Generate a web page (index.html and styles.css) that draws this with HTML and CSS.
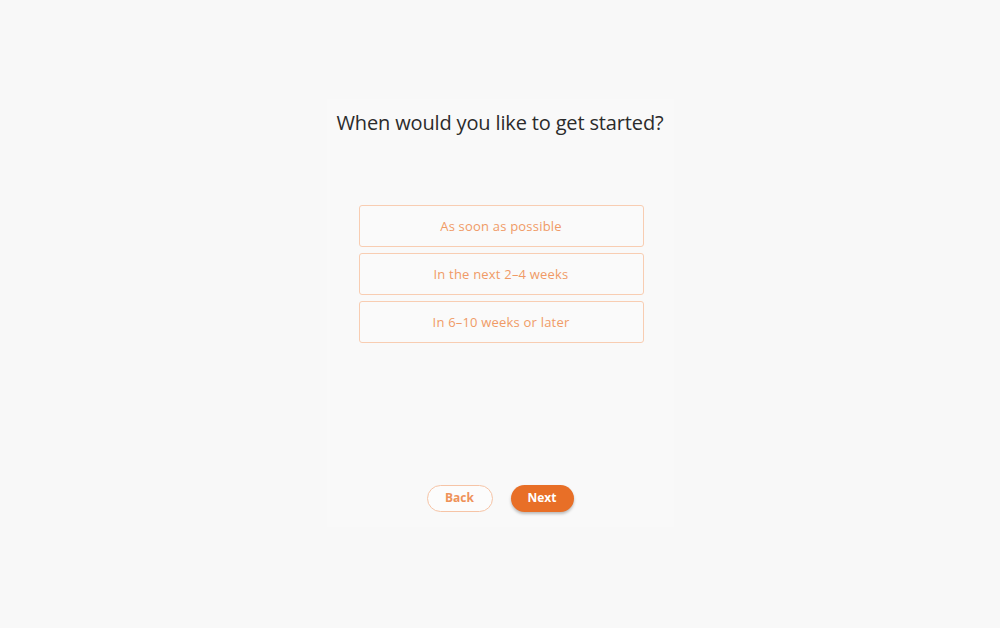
FILE: index.html
```html
<!DOCTYPE html>
<html lang="en">

<head>
  <meta charset="UTF-8">
  <meta name="viewport" content="width=device-width, initial-scale=1.0">
  <title>Get started</title>
  <link rel="stylesheet" href="styles.css">
</head>

<body>
  <div class="panel">
    <h1>When would you like to get started?</h1>

    <div class="options">
      <button class="option">As soon as possible</button>
      <button class="option">In the next 2–4 weeks</button>
      <button class="option">In 6–10 weeks or later</button>
    </div>

    <div class="nav">
      <button class="btn btn-back">Back</button>
      <button class="btn btn-next">Next</button>
    </div>
  </div>
</body>

</html>
```

FILE: styles.css
```css
body {
  margin: 0;
  background-color: #f8f8f8;
  font-family: "Open Sans", Arial, sans-serif;
  color: #2b2b2b;
}

.panel {
  width: 347px;
  height: 428px;
  margin: 99px auto 0;
  background-color: #f9f9f9;
  display: flex;
  flex-direction: column;
  align-items: center;
}

h1 {
  margin: 10px 0 0;
  font-size: 20px;
  font-weight: 400;
  line-height: 28px;
  letter-spacing: -0.15px;
  white-space: nowrap;
}

.options {
  display: flex;
  flex-direction: column;
  gap: 6px;
  margin: 68px 0 0 2px;
}

.option {
  width: 285px;
  height: 42px;
  background-color: #fafafa;
  border: 1px solid #f8cdb2;
  border-radius: 3px;
  color: #f09a66;
  font-family: inherit;
  font-size: 13px;
  letter-spacing: 0.2px;
  padding: 0 0 1px;
  cursor: pointer;
}

.nav {
  display: flex;
  gap: 18px;
  margin-top: 142px;
}

.btn {
  height: 27px;
  border-radius: 14px;
  font-family: inherit;
  font-size: 12px;
  font-weight: 700;
  padding: 0 0 2px;
  cursor: pointer;
}

.btn-back {
  width: 66px;
  background-color: #fcfcfc;
  border: 1px solid #f6c4a6;
  color: #ef9259;
}

.btn-next {
  width: 63px;
  background-color: #e86f27;
  border: none;
  color: #fff;
  box-shadow: 0 2px 3px rgba(0, 0, 0, 0.25);
}
```
